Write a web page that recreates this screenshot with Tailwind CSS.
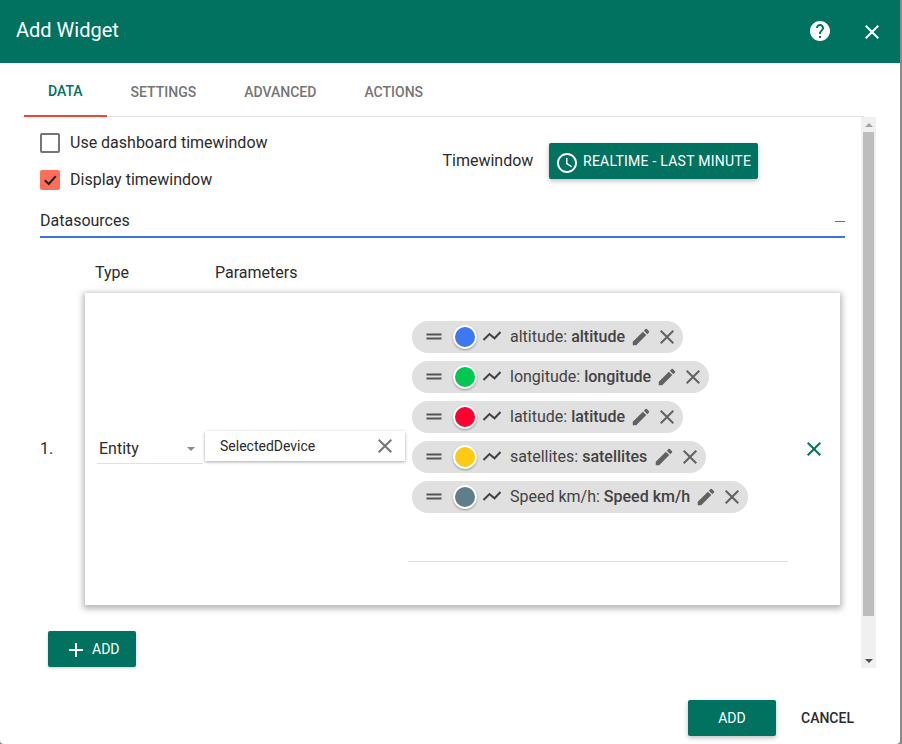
<!DOCTYPE html>
<html lang="en">
<head>
    <meta charset="UTF-8">
    <meta name="viewport" content="width=device-width, initial-scale=1.0">
    <title>Add Widget</title>
    <script src="https://cdn.jsdelivr.net/npm/@tailwindcss/browser@4"></script>
</head>
<body class="w-[902px] h-[744px] overflow-hidden bg-[#8a8a8a] font-['Roboto',sans-serif] text-[#2b2b2b]">
    <div class="w-[900px] h-[744px] bg-white rounded-b-[4px] flex flex-col">

        <!-- Title bar -->
        <header class="h-[63px] shrink-0 bg-[#00725f] text-white flex items-center pl-4">
            <h1 class="text-xl leading-none grow -mt-[4px]">Add Widget</h1>
            <svg class="w-6 h-6 mr-7 -mt-[2px]" viewBox="0 0 24 24" fill="#fff"><path d="M12 2C6.48 2 2 6.48 2 12s4.48 10 10 10 10-4.48 10-10S17.52 2 12 2zm1 17h-2v-2h2v2zm2.07-7.75-.9.92C13.45 12.9 13 13.5 13 15h-2v-.5c0-1.1.45-2.1 1.17-2.83l1.24-1.26c.37-.36.59-.86.59-1.41 0-1.1-.9-2-2-2s-2 .9-2 2H8c0-2.21 1.79-4 4-4s4 1.79 4 4c0 .88-.36 1.68-.93 2.25z"/></svg>
            <svg class="w-6 h-6 mr-4" viewBox="0 0 24 24" fill="#fff"><path d="M19 6.41 17.59 5 12 10.59 6.41 5 5 6.41 10.59 12 5 17.59 6.41 19 12 13.41 17.59 19 19 17.59 13.41 12z"/></svg>
        </header>

        <!-- Tabs -->
        <nav class="h-[54px] shrink-0 ml-6 w-[840px] border-b border-[#e0e0e0] flex text-sm font-medium text-[#757575]">
            <div class="h-[54px] px-6 pt-[4px] flex items-center border-b-2 border-[#f44336] text-[#00725f]">DATA</div>
            <div class="h-[53px] px-6 pt-[4px] flex items-center">SETTINGS</div>
            <div class="h-[53px] px-6 pt-[4px] flex items-center">ADVANCED</div>
            <div class="h-[53px] px-6 pt-[4px] flex items-center">ACTIONS</div>
        </nav>

        <!-- Scrolling form -->
        <main class="h-[551px] shrink-0 ml-6 w-[852px] flex">
            <div class="w-[837px] pl-4 pr-4 flex flex-col">
                <div class="flex h-[84px]">
                    <div class="w-[403px] pt-4 flex flex-col gap-[17px]">
                        <label class="flex items-center gap-[10px] h-5">
                            <span class="w-5 h-5 rounded-[2px] border-2 border-[#757575]"></span>
                            <span>Use dashboard timewindow</span>
                        </label>
                        <label class="flex items-center gap-[10px] h-5">
                            <span class="w-5 h-5 rounded-[2px] bg-[#ff6e5a] flex items-center justify-center">
                                <svg class="w-4 h-4" viewBox="0 0 16 16" fill="none" stroke="#222" stroke-width="2"><path d="M2.8 8.3 6.8 12 13.8 4.2"/></svg>
                            </span>
                            <span>Display timewindow</span>
                        </label>
                    </div>
                    <div class="pt-[26px] -ml-[0.5px] flex items-start">
                        <span class="w-[106.5px] h-9 leading-9">Timewindow</span>
                        <button class="h-9 w-[209px] bg-[#00725f] text-white rounded-[2px] shadow-[0_2px_5px_rgba(0,0,0,0.26)] flex items-center pl-[6px] text-sm font-[450] tracking-[0.25px]">
                            <svg class="w-6 h-6 mr-[4px] mt-[4px] shrink-0" viewBox="0 0 24 24" fill="#fff"><path d="M11.99 2C6.47 2 2 6.48 2 12s4.47 10 9.99 10C17.52 22 22 17.52 22 12S17.52 2 11.99 2zM12 20c-4.42 0-8-3.58-8-8s3.58-8 8-8 8 3.58 8 8-3.58 8-8 8zm.5-13H11v6l5.25 3.15.75-1.23-4.5-2.67z"/></svg>
                            REALTIME - LAST MINUTE
                        </button>
                    </div>
                </div>

                <!-- Datasources heading -->
                <div class="h-[37px] w-[805px] border-b-2 border-[#3b72e8] flex justify-between items-center pt-[5px]">
                    <span>Datasources</span>
                    <span class="w-[10px] h-px bg-[#3b72e8]"></span>
                </div>

                <div class="flex h-[55px] items-center pt-[14px]">
                    <span class="ml-[55px] w-[120px]">Type</span>
                    <span>Parameters</span>
                </div>

                <!-- Datasource row -->
                <div class="flex items-center h-[312px]">
                    <span class="w-[45px]">1.</span>
                    <div class="w-[755px] h-[312px] bg-white shadow-[0_2px_6px_2px_rgba(0,0,0,0.28)] flex items-center">
                        <div class="ml-3 w-[106px] h-[30px] border-b border-[#e0e0e0] flex items-center justify-between pr-2">
                            <span class="pl-[2px] pt-[1px]">Entity</span>
                            <span class="w-0 h-0 border-x-[4px] border-x-transparent border-t-[4px] border-t-[#8a8a8a] mt-[1px]"></span>
                        </div>
                        <div class="ml-[2px] w-[200px] h-[30px] -mt-[6px] bg-white shadow-[0_1px_3px_rgba(0,0,0,0.35)] flex items-center justify-between pl-[15px] pr-2 text-sm">
                            <span>SelectedDevice</span>
                            <svg class="w-6 h-6" viewBox="0 0 24 24" fill="#757575"><path d="M19 6.41 17.59 5 12 10.59 6.41 5 5 6.41 10.59 12 5 17.59 6.41 19 12 13.41 17.59 19 19 17.59 13.41 12z"/></svg>
                        </div>
                        <div class="ml-[3px] w-[380px] h-[312px] pt-7">
                            <div class="h-[241px] border-b border-[#e0e0e0] flex flex-col items-start gap-2 pl-1">
                                <!-- altitude -->
                                <div class="h-8 rounded-full bg-[#e0e0e0] flex items-center text-[#424242] pl-[13px] pr-[4px]">
                                    <svg class="w-[18px] h-[18px] shrink-0" viewBox="0 0 18 18" fill="#555"><path d="M1.5 5.5h15v2h-15zM1.5 9.5h15v2h-15z"/></svg>
                                    <span class="ml-[10px] w-6 h-6 rounded-full border-2 border-white bg-[#3b78f2] shadow-[0_1px_2px_rgba(0,0,0,0.35)] shrink-0"></span>
                                    <svg class="ml-[6px] w-[18px] h-3 shrink-0" viewBox="0 0 18 12" fill="none" stroke="#424242" stroke-width="2"><path d="M.5 9 6.5 3 11.5 7.3 17.5 1"/></svg>
                                    <span class="ml-[9px] whitespace-nowrap">altitude: <b class="font-medium">altitude</b></span>
                                    <svg class="ml-[5px] w-[22px] h-[22px] shrink-0" viewBox="0 0 24 24" fill="#616161"><path d="M3 17.25V21h3.75L17.81 9.94l-3.75-3.75L3 17.25zM20.71 7.04a1 1 0 0 0 0-1.41l-2.34-2.34a1 1 0 0 0-1.41 0l-1.83 1.83 3.75 3.75 1.83-1.83z"/></svg>
                                    <svg class="ml-[3px] w-6 h-6 shrink-0" viewBox="0 0 24 24" fill="#616161"><path d="M19 6.41 17.59 5 12 10.59 6.41 5 5 6.41 10.59 12 5 17.59 6.41 19 12 13.41 17.59 19 19 17.59 13.41 12z"/></svg>
                                </div>
                                <!-- longitude -->
                                <div class="h-8 rounded-full bg-[#e0e0e0] flex items-center text-[#424242] pl-[13px] pr-[4px]">
                                    <svg class="w-[18px] h-[18px] shrink-0" viewBox="0 0 18 18" fill="#555"><path d="M1.5 5.5h15v2h-15zM1.5 9.5h15v2h-15z"/></svg>
                                    <span class="ml-[10px] w-6 h-6 rounded-full border-2 border-white bg-[#00c853] shadow-[0_1px_2px_rgba(0,0,0,0.35)] shrink-0"></span>
                                    <svg class="ml-[6px] w-[18px] h-3 shrink-0" viewBox="0 0 18 12" fill="none" stroke="#424242" stroke-width="2"><path d="M.5 9 6.5 3 11.5 7.3 17.5 1"/></svg>
                                    <span class="ml-[9px] whitespace-nowrap">longitude: <b class="font-medium">longitude</b></span>
                                    <svg class="ml-[5px] w-[22px] h-[22px] shrink-0" viewBox="0 0 24 24" fill="#616161"><path d="M3 17.25V21h3.75L17.81 9.94l-3.75-3.75L3 17.25zM20.71 7.04a1 1 0 0 0 0-1.41l-2.34-2.34a1 1 0 0 0-1.41 0l-1.83 1.83 3.75 3.75 1.83-1.83z"/></svg>
                                    <svg class="ml-[3px] w-6 h-6 shrink-0" viewBox="0 0 24 24" fill="#616161"><path d="M19 6.41 17.59 5 12 10.59 6.41 5 5 6.41 10.59 12 5 17.59 6.41 19 12 13.41 17.59 19 19 17.59 13.41 12z"/></svg>
                                </div>
                                <!-- latitude -->
                                <div class="h-8 rounded-full bg-[#e0e0e0] flex items-center text-[#424242] pl-[13px] pr-[4px]">
                                    <svg class="w-[18px] h-[18px] shrink-0" viewBox="0 0 18 18" fill="#555"><path d="M1.5 5.5h15v2h-15zM1.5 9.5h15v2h-15z"/></svg>
                                    <span class="ml-[10px] w-6 h-6 rounded-full border-2 border-white bg-[#ff0030] shadow-[0_1px_2px_rgba(0,0,0,0.35)] shrink-0"></span>
                                    <svg class="ml-[6px] w-[18px] h-3 shrink-0" viewBox="0 0 18 12" fill="none" stroke="#424242" stroke-width="2"><path d="M.5 9 6.5 3 11.5 7.3 17.5 1"/></svg>
                                    <span class="ml-[9px] whitespace-nowrap">latitude: <b class="font-medium">latitude</b></span>
                                    <svg class="ml-[5px] w-[22px] h-[22px] shrink-0" viewBox="0 0 24 24" fill="#616161"><path d="M3 17.25V21h3.75L17.81 9.94l-3.75-3.75L3 17.25zM20.71 7.04a1 1 0 0 0 0-1.41l-2.34-2.34a1 1 0 0 0-1.41 0l-1.83 1.83 3.75 3.75 1.83-1.83z"/></svg>
                                    <svg class="ml-[3px] w-6 h-6 shrink-0" viewBox="0 0 24 24" fill="#616161"><path d="M19 6.41 17.59 5 12 10.59 6.41 5 5 6.41 10.59 12 5 17.59 6.41 19 12 13.41 17.59 19 19 17.59 13.41 12z"/></svg>
                                </div>
                                <!-- satellites -->
                                <div class="h-8 rounded-full bg-[#e0e0e0] flex items-center text-[#424242] pl-[13px] pr-[4px]">
                                    <svg class="w-[18px] h-[18px] shrink-0" viewBox="0 0 18 18" fill="#555"><path d="M1.5 5.5h15v2h-15zM1.5 9.5h15v2h-15z"/></svg>
                                    <span class="ml-[10px] w-6 h-6 rounded-full border-2 border-white bg-[#ffca16] shadow-[0_1px_2px_rgba(0,0,0,0.35)] shrink-0"></span>
                                    <svg class="ml-[6px] w-[18px] h-3 shrink-0" viewBox="0 0 18 12" fill="none" stroke="#424242" stroke-width="2"><path d="M.5 9 6.5 3 11.5 7.3 17.5 1"/></svg>
                                    <span class="ml-[9px] whitespace-nowrap">satellites: <b class="font-medium">satellites</b></span>
                                    <svg class="ml-[6px] w-[22px] h-[22px] shrink-0" viewBox="0 0 24 24" fill="#616161"><path d="M3 17.25V21h3.75L17.81 9.94l-3.75-3.75L3 17.25zM20.71 7.04a1 1 0 0 0 0-1.41l-2.34-2.34a1 1 0 0 0-1.41 0l-1.83 1.83 3.75 3.75 1.83-1.83z"/></svg>
                                    <svg class="ml-[3px] w-6 h-6 shrink-0" viewBox="0 0 24 24" fill="#616161"><path d="M19 6.41 17.59 5 12 10.59 6.41 5 5 6.41 10.59 12 5 17.59 6.41 19 12 13.41 17.59 19 19 17.59 13.41 12z"/></svg>
                                </div>
                                <!-- speed -->
                                <div class="h-8 rounded-full bg-[#e0e0e0] flex items-center text-[#424242] pl-[13px] pr-[4px]">
                                    <svg class="w-[18px] h-[18px] shrink-0" viewBox="0 0 18 18" fill="#555"><path d="M1.5 5.5h15v2h-15zM1.5 9.5h15v2h-15z"/></svg>
                                    <span class="ml-[10px] w-6 h-6 rounded-full border-2 border-white bg-[#607d8b] shadow-[0_1px_2px_rgba(0,0,0,0.35)] shrink-0"></span>
                                    <svg class="ml-[6px] w-[18px] h-3 shrink-0" viewBox="0 0 18 12" fill="none" stroke="#424242" stroke-width="2"><path d="M.5 9 6.5 3 11.5 7.3 17.5 1"/></svg>
                                    <span class="ml-[9px] whitespace-nowrap">Speed km/h: <b class="font-medium">Speed km/h</b></span>
                                    <svg class="ml-[5px] w-[22px] h-[22px] shrink-0" viewBox="0 0 24 24" fill="#616161"><path d="M3 17.25V21h3.75L17.81 9.94l-3.75-3.75L3 17.25zM20.71 7.04a1 1 0 0 0 0-1.41l-2.34-2.34a1 1 0 0 0-1.41 0l-1.83 1.83 3.75 3.75 1.83-1.83z"/></svg>
                                    <svg class="ml-[3px] w-6 h-6 shrink-0" viewBox="0 0 24 24" fill="#616161"><path d="M19 6.41 17.59 5 12 10.59 6.41 5 5 6.41 10.59 12 5 17.59 6.41 19 12 13.41 17.59 19 19 17.59 13.41 12z"/></svg>
                                </div>
                            </div>
                        </div>
                        <svg class="ml-[14px] w-6 h-6 shrink-0" viewBox="0 0 24 24" fill="#00725f"><path d="M19 6.41 17.59 5 12 10.59 6.41 5 5 6.41 10.59 12 5 17.59 6.41 19 12 13.41 17.59 19 19 17.59 13.41 12z"/></svg>
                    </div>
                </div>

                <button class="mt-[26px] ml-2 w-[88px] h-9 bg-[#00725f] text-white rounded-[2px] shadow-[0_1px_3px_rgba(0,0,0,0.2)] flex items-center pl-4 text-sm font-[450]">
                    <svg class="w-6 h-6 mr-[4px] mt-[2px] shrink-0" viewBox="0 0 24 24" fill="#fff"><path d="M19 13h-6v6h-2v-6H5v-2h6V5h2v6h6z"/></svg>
                    ADD
                </button>
            </div>

            <!-- Scrollbar -->
            <div class="w-[15px] h-[551px] bg-[#f0f0f0] flex flex-col items-center">
                <div class="h-[15px] flex items-center justify-center"><span class="w-0 h-0 border-x-[4px] border-x-transparent border-b-[4px] border-b-[#a3a3a3]"></span></div>
                <div class="w-[11px] h-[484px] bg-[#bdbdbd]"></div>
                <div class="h-[52px] w-full flex items-end justify-center pb-[5px]"><span class="w-0 h-0 border-x-[4px] border-x-transparent border-t-[4px] border-t-[#505050]"></span></div>
            </div>
        </main>

        <!-- Actions -->
        <footer class="h-[76px] shrink-0 flex items-start pt-[32px] text-sm">
            <button class="ml-[688px] w-[88px] h-9 bg-[#00725f] text-white rounded-[2px] font-[450] shadow-[0_2px_5px_rgba(0,0,0,0.26)]">ADD</button>
            <button class="ml-[25px] h-9 font-medium">CANCEL</button>
        </footer>
    </div>
</body>
</html>
